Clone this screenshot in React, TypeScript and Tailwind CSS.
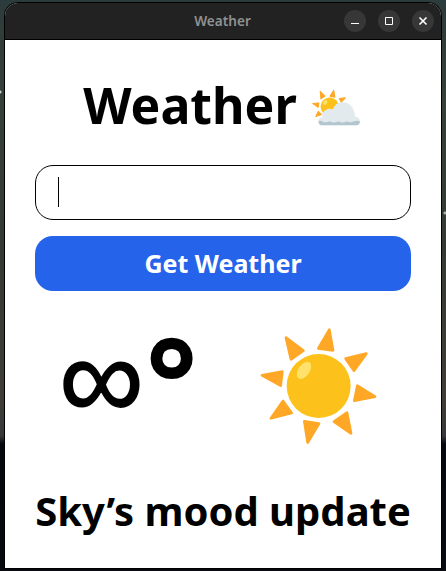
import React from "react";

function SunBehindCloud() {
  return (
    <svg viewBox="62 40 150 115" className="h-[39px] w-[51px] shrink-0" aria-hidden="true">
      <g fill="#ffa726" stroke="#ffa726" strokeWidth="3" strokeLinejoin="round">
        <path d="M89 50L103 64L91 72Z" />
        <path d="M129 47L132 67L118 64Z" />
        <path d="M163 69L145 71L151 82Z" />
        <path d="M67 86L85 84L83 97Z" />
        <path d="M76 124L83 109L93 118Z" />
      </g>
      <circle cx="117" cy="95" r="27" fill="#fcc21b" />
      <ellipse cx="104" cy="83" rx="5" ry="8" fill="#ffe36c" transform="rotate(35 104 83)" />
      <path d="M95 150Q84 150 84 137Q84 128 96 126Q92 114 105 105Q115 98 126 103Q135 81 156 82Q184 84 189 111Q193 122 190 124Q206 126 206 138Q206 150 195 150Z" fill="#e2eaee" />
      <path d="M84 137Q92 135 98 140Q108 143 117 138Q130 145 142 138Q154 145 167 138Q178 144 189 138Q198 135 206 138Q206 150 195 150H95Q84 150 84 137Z" fill="#b3c6cf" />
    </svg>
  );
}

function Sun() {
  return (
    <svg viewBox="40 33 360 360" className="h-[120px] w-[120px] shrink-0" aria-hidden="true">
      <g fill="#ffa726" stroke="#ffa726" strokeWidth="8" strokeLinejoin="round">
        <path d="M121 68L173 107L136 133Z" />
        <path d="M251 44L262 106L218 100Z" />
        <path d="M362 116L300 131L325 167Z" />
        <path d="M388 245L335 212L326 257Z" />
        <path d="M316 355L265 320L304 293Z" />
        <path d="M186 383L220 326L176 319Z" />
        <path d="M76 310L138 294L112 258Z" />
        <path d="M49 181L110 170L105 212Z" />
      </g>
      <circle cx="219" cy="213" r="96" fill="#fcc21b" />
      <ellipse cx="175" cy="166" rx="17" ry="29" fill="#ffe16b" transform="rotate(34 175 166)" />
    </svg>
  );
}

function WindowButton({ label, children }: { label: string; children: React.ReactNode }) {
  return (
    <button aria-label={label} className="flex size-[22px] items-center justify-center rounded-full bg-[#373737]">
      <svg viewBox="0 0 22 22" className="size-[22px]" fill="none" stroke="#fff">
        {children}
      </svg>
    </button>
  );
}

export default function App() {
  return (
    <div className="h-[571px] w-[446px] overflow-hidden bg-[radial-gradient(circle_at_0px_92px,#c9cfcb_1px,transparent_2px),radial-gradient(circle_at_445px_213px,#aab0aa_1px,transparent_2px),linear-gradient(180deg,#2c3b3b_0px,#354139_100px,#343a33_250px,#403d36_400px,#37383a_436px,#05080f_444px,#070a10_571px)] pt-[2px] pl-1 font-['Noto_Sans','Liberation_Sans',sans-serif]">
      <div className="flex h-[567px] w-[438px] flex-col overflow-hidden rounded-t-[14px] border border-b-0 border-black bg-white">
        <header className="grid h-[37px] shrink-0 grid-cols-[1fr_auto_1fr] items-center border-b border-black bg-[#222]">
          <span />
          <span className="mr-px text-[13.6px] font-semibold text-[#919191]">Weather</span>
          <div className="flex justify-end gap-3 pr-[7px]">
            <WindowButton label="Minimize"><path d="M7 13.5H15" /></WindowButton>
            <WindowButton label="Maximize"><path d="M7.5 7.5H14.5V14.5H7.5Z" /></WindowButton>
            <WindowButton label="Close"><path d="M7.5 7.5L14.5 14.5M14.5 7.5L7.5 14.5" strokeWidth="1.6" /></WindowButton>
          </div>
        </header>
        <main className="flex h-[528px] shrink-0 flex-col px-[30px] text-black">
          <div className="mt-[30px] flex h-[70px] items-center justify-center gap-[14px] pr-px">
            <h1 className="text-[50px] leading-[70px] font-bold">Weather</h1>
            <div className="pt-1"><SunBehindCloud /></div>
          </div>
          <div className="mt-[25px] flex h-[55px] shrink-0 items-center rounded-[18px] border border-black pb-0.5 pl-[22px]">
            <span className="h-[30px] w-px bg-black" />
          </div>
          <button className="mt-4 h-[55px] shrink-0 rounded-[18px] bg-[#2563eb] text-[25px] leading-[55px] font-bold text-white">Get Weather</button>
          <div className="mt-[35px] flex h-[120px] items-start justify-between pr-[32.5px] pl-[24px]">
            <div className="flex items-start whitespace-nowrap">
              <span className="font-['Liberation_Sans',sans-serif] text-[119px] leading-[103px] [-webkit-text-stroke:1.5px_black]">∞</span>
              <span className="ml-[2px] text-[122px] leading-[107px] font-bold">°</span>
            </div>
            <Sun />
          </div>
          <h2 className="mt-[37px] text-center text-[40px] leading-[56px] font-bold whitespace-nowrap">Sky’s mood update</h2>
        </main>
        <div className="h-px shrink-0 bg-black" />
      </div>
    </div>
  );
}
